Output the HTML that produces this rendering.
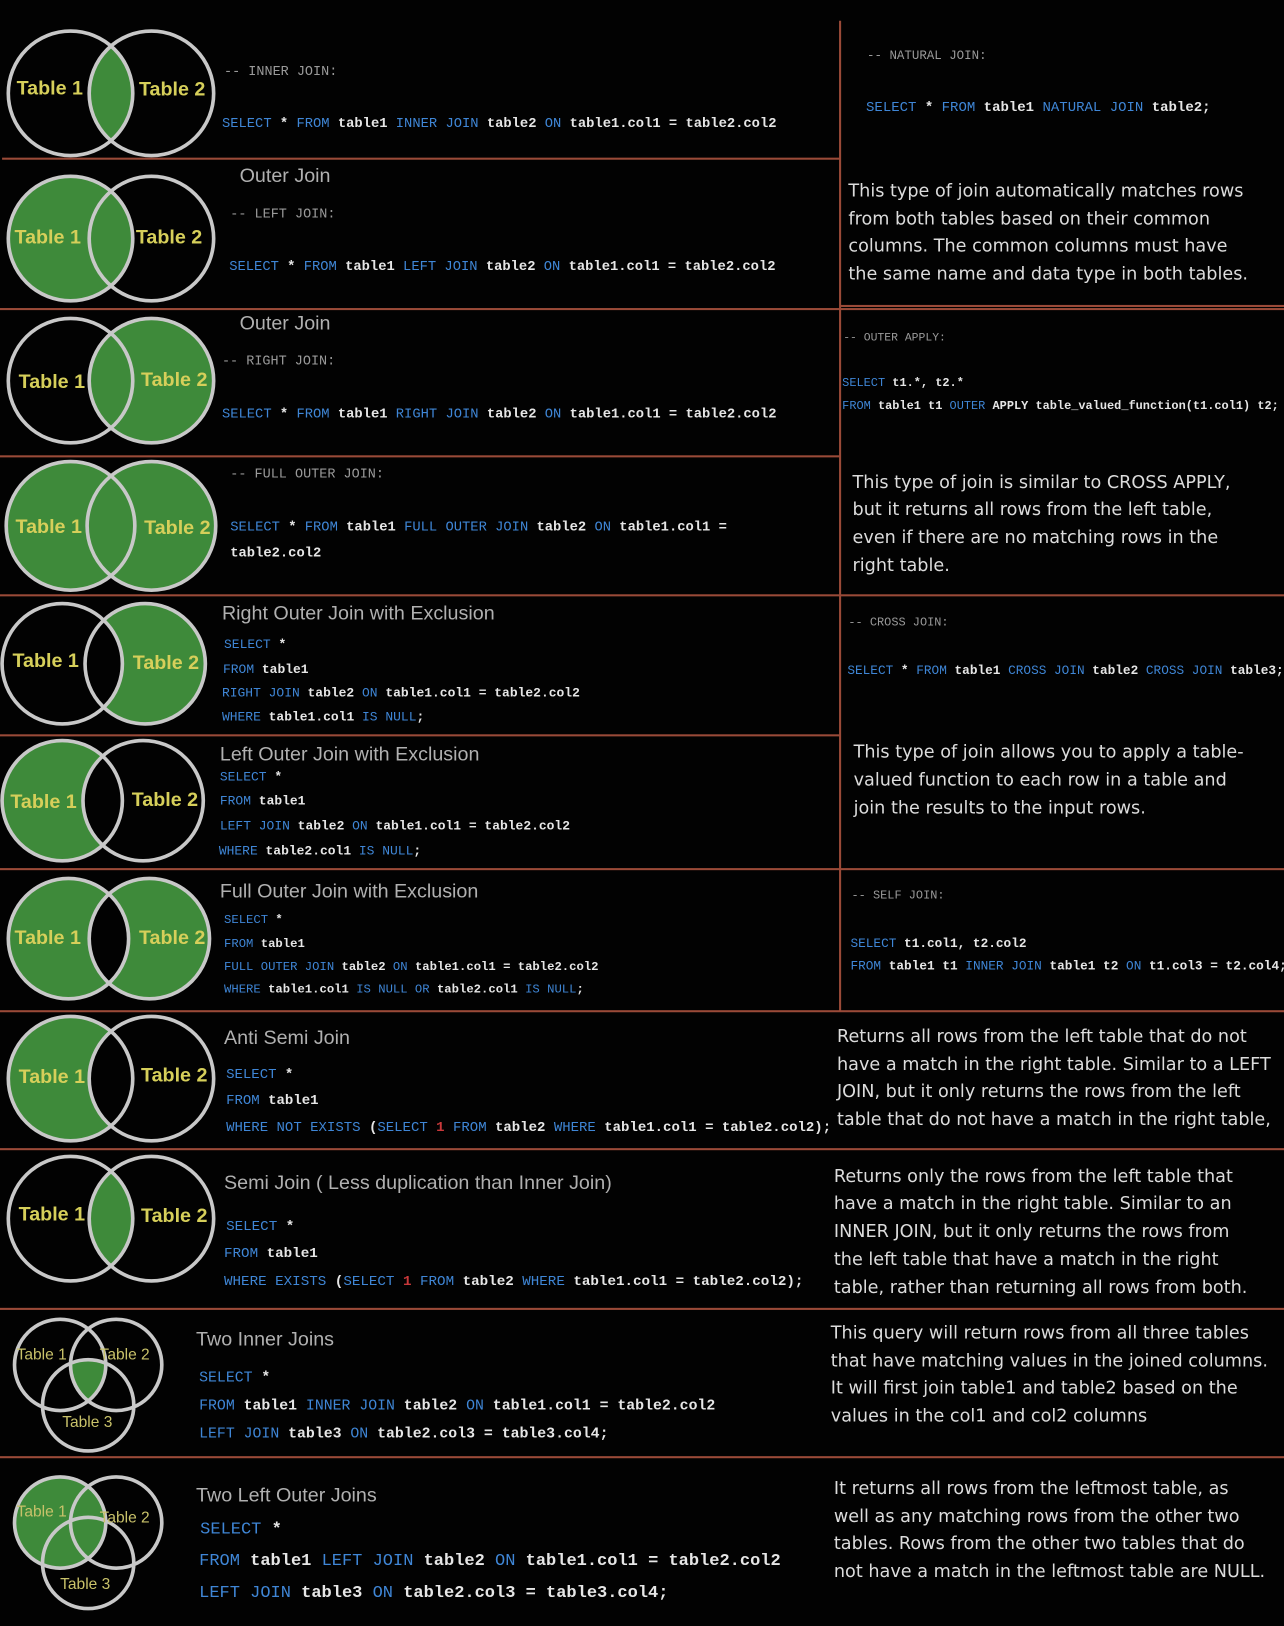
<!DOCTYPE html>
<html><head><meta charset="utf-8"><style>
html,body{margin:0;padding:0;background:#020202;}
body{width:1284px;height:1626px;overflow:hidden;position:relative;}
#w{position:absolute;left:0;top:0;width:1238px;height:1568px;transform:scale(1.03715);transform-origin:0 0;}
.t{position:absolute;white-space:pre;line-height:1;}
.c{font-family:"Liberation Mono",monospace;font-weight:bold;color:#e6e6e6;transform:translateY(-50%);}
.k{color:#3f86d6;font-weight:normal;}
.m{color:#9a9a9a;font-weight:normal;}
.r{color:#c8383a;}
.ti{font-family:"Liberation Sans",sans-serif;font-size:19px;color:#b0b0b0;transform:translateY(-50%);}
.d{font-family:"DejaVu Sans",sans-serif;font-size:17px;color:#dcdcdc;transform:translateY(-50%);}
.h{position:absolute;height:2px;background:#9a4a38;}
.v{position:absolute;width:2px;background:#9a4a38;}
svg{position:absolute;left:0;top:0;}
</style></head><body><div id="w">
<svg width="1238" height="1568" viewBox="0 0 1238 1568">
<defs>
<clipPath id="a1"><circle cx="68" cy="90" r="60"/></clipPath>
<clipPath id="a3"><circle cx="68" cy="367" r="60"/></clipPath>
<clipPath id="a5"><circle cx="60" cy="640" r="58"/></clipPath>
<clipPath id="b6"><circle cx="138" cy="772" r="58"/></clipPath>
<clipPath id="a7"><circle cx="66" cy="905" r="58"/></clipPath>
<clipPath id="b8"><circle cx="146" cy="1040" r="60"/></clipPath>
<clipPath id="a9"><circle cx="68" cy="1175" r="60"/></clipPath>
<clipPath id="a10"><circle cx="58" cy="1316" r="44"/></clipPath>
<clipPath id="b10"><circle cx="112" cy="1316" r="44"/></clipPath>
</defs>
<g fill="#3e8a3a">
<circle cx="146" cy="90" r="60" clip-path="url(#a1)"/>
<circle cx="68" cy="230" r="60"/>
<circle cx="146" cy="367" r="60"/>
<circle cx="68" cy="507" r="62"/><circle cx="146" cy="507" r="62"/>
<circle cx="140" cy="640" r="58"/><circle cx="140" cy="640" r="58" fill="#020202" clip-path="url(#a5)"/>
<circle cx="60" cy="772" r="58"/><circle cx="60" cy="772" r="58" fill="#020202" clip-path="url(#b6)"/>
<circle cx="66" cy="905" r="58"/><circle cx="144" cy="905" r="58"/><circle cx="144" cy="905" r="58" fill="#020202" clip-path="url(#a7)"/>
<circle cx="68" cy="1040" r="60"/><circle cx="68" cy="1040" r="60" fill="#020202" clip-path="url(#b8)"/>
<circle cx="146" cy="1175" r="60" clip-path="url(#a9)"/>
<g clip-path="url(#a10)"><circle cx="85" cy="1355" r="44" clip-path="url(#b10)"/></g>
<circle cx="58" cy="1468" r="44"/>
</g>
<g fill="none" stroke="#c8c8c8" stroke-width="3.5">
<circle cx="68" cy="90" r="60"/><circle cx="146" cy="90" r="60"/>
<circle cx="68" cy="230" r="60"/><circle cx="146" cy="230" r="60"/>
<circle cx="68" cy="367" r="60"/><circle cx="146" cy="367" r="60"/>
<circle cx="68" cy="507" r="62"/><circle cx="146" cy="507" r="62"/>
<circle cx="60" cy="640" r="58"/><circle cx="140" cy="640" r="58"/>
<circle cx="60" cy="772" r="58"/><circle cx="138" cy="772" r="58"/>
<circle cx="66" cy="905" r="58"/><circle cx="144" cy="905" r="58"/>
<circle cx="68" cy="1040" r="60"/><circle cx="146" cy="1040" r="60"/>
<circle cx="68" cy="1175" r="60"/><circle cx="146" cy="1175" r="60"/>
<circle cx="58" cy="1316" r="44"/><circle cx="112" cy="1316" r="44"/><circle cx="85" cy="1355" r="44"/>
<circle cx="58" cy="1468" r="44"/><circle cx="112" cy="1468" r="44"/><circle cx="85" cy="1507" r="44"/>
</g>
<g fill="#d6cf5a" font-family="Liberation Sans,sans-serif" font-size="19" font-weight="bold">
<text x="16" y="91">Table 1</text><text x="134" y="92">Table 2</text>
<text x="14" y="235">Table 1</text><text x="131" y="235">Table 2</text>
<text x="18" y="374">Table 1</text><text x="136" y="372">Table 2</text>
<text x="15" y="514">Table 1</text><text x="139" y="515">Table 2</text>
<text x="12" y="643">Table 1</text><text x="128" y="645">Table 2</text>
<text x="10" y="779">Table 1</text><text x="127" y="777">Table 2</text>
<text x="14" y="910">Table 1</text><text x="134" y="910">Table 2</text>
<text x="18" y="1044">Table 1</text><text x="136" y="1043">Table 2</text>
<text x="18" y="1177">Table 1</text><text x="136" y="1178">Table 2</text>
</g>
<g fill="#c9c26a" font-family="Liberation Sans,sans-serif" font-size="15">
<text x="16" y="1311">Table 1</text><text x="96" y="1311">Table 2</text><text x="60" y="1376">Table 3</text>
<text x="16" y="1462">Table 1</text><text x="96" y="1468">Table 2</text><text x="58" y="1532">Table 3</text>
</g>
</svg>

<div class="h" style="left:2px;top:152px;width:808px"></div>
<div class="h" style="left:0;top:297px;width:1238px"></div>
<div class="h" style="left:0;top:439px;width:810px"></div>
<div class="h" style="left:810px;top:294px;width:428px"></div>
<div class="h" style="left:0;top:573px;width:1238px"></div>
<div class="h" style="left:0;top:708px;width:810px"></div>
<div class="h" style="left:0;top:837px;width:1238px"></div>
<div class="h" style="left:0;top:974px;width:1238px"></div>
<div class="h" style="left:0;top:1107px;width:1238px"></div>
<div class="h" style="left:0;top:1261px;width:1238px"></div>
<div class="h" style="left:0;top:1404px;width:1238px"></div>
<div class="v" style="left:809px;top:20px;height:955px"></div>

<!-- left column -->
<div class="t c" style="left:216px;top:69px;font-size:13px"><span class="m">-- INNER JOIN:</span></div>
<div class="t c" style="left:214px;top:119px;font-size:13.3px"><span class="k">SELECT</span> * <span class="k">FROM</span> table1 <span class="k">INNER JOIN</span> table2 <span class="k">ON</span> table1.col1 = table2.col2</div>

<div class="t ti" style="left:231px;top:170px">Outer Join</div>
<div class="t c" style="left:222px;top:206px;font-size:13px"><span class="m">-- LEFT JOIN:</span></div>
<div class="t c" style="left:221px;top:257px;font-size:13.3px"><span class="k">SELECT</span> * <span class="k">FROM</span> table1 <span class="k">LEFT JOIN</span> table2 <span class="k">ON</span> table1.col1 = table2.col2</div>

<div class="t ti" style="left:231px;top:312px">Outer Join</div>
<div class="t c" style="left:214px;top:348px;font-size:13px"><span class="m">-- RIGHT JOIN:</span></div>
<div class="t c" style="left:214px;top:399px;font-size:13.3px"><span class="k">SELECT</span> * <span class="k">FROM</span> table1 <span class="k">RIGHT JOIN</span> table2 <span class="k">ON</span> table1.col1 = table2.col2</div>

<div class="t c" style="left:222px;top:457px;font-size:13px"><span class="m">-- FULL OUTER JOIN:</span></div>
<div class="t c" style="left:222px;top:508px;font-size:13.3px"><span class="k">SELECT</span> * <span class="k">FROM</span> table1 <span class="k">FULL OUTER JOIN</span> table2 <span class="k">ON</span> table1.col1 =</div>
<div class="t c" style="left:222px;top:533px;font-size:13.3px">table2.col2</div>

<div class="t ti" style="left:214px;top:592px">Right Outer Join with Exclusion</div>
<div class="t c" style="left:216px;top:622px;font-size:12.5px"><span class="k">SELECT</span> *</div>
<div class="t c" style="left:215px;top:646px;font-size:12.5px"><span class="k">FROM</span> table1</div>
<div class="t c" style="left:214px;top:669px;font-size:12.5px"><span class="k">RIGHT JOIN</span> table2 <span class="k">ON</span> table1.col1 = table2.col2</div>
<div class="t c" style="left:214px;top:692px;font-size:12.5px"><span class="k">WHERE</span> table1.col1 <span class="k">IS NULL</span>;</div>

<div class="t ti" style="left:212px;top:728px">Left Outer Join with Exclusion</div>
<div class="t c" style="left:212px;top:750px;font-size:12.5px"><span class="k">SELECT</span> *</div>
<div class="t c" style="left:212px;top:773px;font-size:12.5px"><span class="k">FROM</span> table1</div>
<div class="t c" style="left:212px;top:797px;font-size:12.5px"><span class="k">LEFT JOIN</span> table2 <span class="k">ON</span> table1.col1 = table2.col2</div>
<div class="t c" style="left:211px;top:821px;font-size:12.5px"><span class="k">WHERE</span> table2.col1 <span class="k">IS NULL</span>;</div>

<div class="t ti" style="left:212px;top:860px">Full Outer Join with Exclusion</div>
<div class="t c" style="left:216px;top:888px;font-size:11.8px"><span class="k">SELECT</span> *</div>
<div class="t c" style="left:216px;top:911px;font-size:11.8px"><span class="k">FROM</span> table1</div>
<div class="t c" style="left:216px;top:933px;font-size:11.8px"><span class="k">FULL OUTER JOIN</span> table2 <span class="k">ON</span> table1.col1 = table2.col2</div>
<div class="t c" style="left:216px;top:955px;font-size:11.8px"><span class="k">WHERE</span> table1.col1 <span class="k">IS NULL OR</span> table2.col1 <span class="k">IS NULL</span>;</div>

<div class="t ti" style="left:216px;top:1001px">Anti Semi Join</div>
<div class="t c" style="left:218px;top:1037px;font-size:13.5px"><span class="k">SELECT</span> *</div>
<div class="t c" style="left:218px;top:1062px;font-size:13.5px"><span class="k">FROM</span> table1</div>
<div class="t c" style="left:218px;top:1088px;font-size:13.5px"><span class="k">WHERE NOT EXISTS</span> (<span class="k">SELECT</span> <span class="r">1</span> <span class="k">FROM</span> table2 <span class="k">WHERE</span> table1.col1 = table2.col2);</div>

<div class="t ti" style="left:216px;top:1141px">Semi Join ( Less duplication than Inner Join)</div>
<div class="t c" style="left:218px;top:1184px;font-size:13.7px"><span class="k">SELECT</span> *</div>
<div class="t c" style="left:216px;top:1210px;font-size:13.7px"><span class="k">FROM</span> table1</div>
<div class="t c" style="left:216px;top:1237px;font-size:13.7px"><span class="k">WHERE EXISTS</span> (<span class="k">SELECT</span> <span class="r">1</span> <span class="k">FROM</span> table2 <span class="k">WHERE</span> table1.col1 = table2.col2);</div>

<div class="t ti" style="left:189px;top:1292px">Two Inner Joins</div>
<div class="t c" style="left:192px;top:1329px;font-size:14.3px"><span class="k">SELECT</span> *</div>
<div class="t c" style="left:192px;top:1356px;font-size:14.3px"><span class="k">FROM</span> table1 <span class="k">INNER JOIN</span> table2 <span class="k">ON</span> table1.col1 = table2.col2</div>
<div class="t c" style="left:192px;top:1383px;font-size:14.3px"><span class="k">LEFT JOIN</span> table3 <span class="k">ON</span> table2.col3 = table3.col4;</div>

<div class="t ti" style="left:189px;top:1442px">Two Left Outer Joins</div>
<div class="t c" style="left:193px;top:1475px;font-size:16.4px"><span class="k">SELECT</span> *</div>
<div class="t c" style="left:192px;top:1505px;font-size:16.4px"><span class="k">FROM</span> table1 <span class="k">LEFT JOIN</span> table2 <span class="k">ON</span> table1.col1 = table2.col2</div>
<div class="t c" style="left:192px;top:1536px;font-size:16.4px"><span class="k">LEFT JOIN</span> table3 <span class="k">ON</span> table2.col3 = table3.col4;</div>

<!-- right column -->
<div class="t c" style="left:836px;top:54px;font-size:12px"><span class="m">-- NATURAL JOIN:</span></div>
<div class="t c" style="left:835px;top:105px;font-size:13.5px"><span class="k">SELECT</span> * <span class="k">FROM</span> table1 <span class="k">NATURAL JOIN</span> table2;</div>
<div class="t d" style="left:818px;top:185px">This type of join automatically matches rows</div>
<div class="t d" style="left:818px;top:212px">from both tables based on their common</div>
<div class="t d" style="left:818px;top:238px">columns. The common columns must have</div>
<div class="t d" style="left:818px;top:265px">the same name and data type in both tables.</div>

<div class="t c" style="left:813px;top:327px;font-size:11px"><span class="m">-- OUTER APPLY:</span></div>
<div class="t c" style="left:812px;top:370px;font-size:11.5px"><span class="k">SELECT</span> t1.*, t2.*</div>
<div class="t c" style="left:812px;top:392px;font-size:11.5px"><span class="k">FROM</span> table1 t1 <span class="k">OUTER</span> APPLY table_valued_function(t1.col1) t2;</div>
<div class="t d" style="left:822px;top:466px">This type of join is similar to CROSS APPLY,</div>
<div class="t d" style="left:822px;top:492px">but it returns all rows from the left table,</div>
<div class="t d" style="left:822px;top:519px">even if there are no matching rows in the</div>
<div class="t d" style="left:822px;top:546px">right table.</div>

<div class="t c" style="left:818px;top:601px;font-size:11.5px"><span class="m">-- CROSS JOIN:</span></div>
<div class="t c" style="left:817px;top:647px;font-size:12.3px"><span class="k">SELECT</span> * <span class="k">FROM</span> table1 <span class="k">CROSS JOIN</span> table2 <span class="k">CROSS JOIN</span> table3;</div>
<div class="t d" style="left:823px;top:726px">This type of join allows you to apply a table-</div>
<div class="t d" style="left:823px;top:753px">valued function to each row in a table and</div>
<div class="t d" style="left:823px;top:780px">join the results to the input rows.</div>

<div class="t c" style="left:821px;top:864px;font-size:11.5px"><span class="m">-- SELF JOIN:</span></div>
<div class="t c" style="left:820px;top:910px;font-size:12.3px"><span class="k">SELECT</span> t1.col1, t2.col2</div>
<div class="t c" style="left:820px;top:932px;font-size:12.3px"><span class="k">FROM</span> table1 t1 <span class="k">INNER JOIN</span> table1 t2 <span class="k">ON</span> t1.col3 = t2.col4;</div>

<div class="t d" style="left:807px;top:1000px">Returns all rows from the left table that do not</div>
<div class="t d" style="left:807px;top:1027px">have a match in the right table. Similar to a LEFT</div>
<div class="t d" style="left:807px;top:1053px">JOIN, but it only returns the rows from the left</div>
<div class="t d" style="left:807px;top:1080px">table that do not have a match in the right table,</div>

<div class="t d" style="left:804px;top:1135px">Returns only the rows from the left table that</div>
<div class="t d" style="left:804px;top:1161px">have a match in the right table. Similar to an</div>
<div class="t d" style="left:804px;top:1188px">INNER JOIN, but it only returns the rows from</div>
<div class="t d" style="left:804px;top:1215px">the left table that have a match in the right</div>
<div class="t d" style="left:804px;top:1242px">table, rather than returning all rows from both.</div>

<div class="t d" style="left:801px;top:1286px">This query will return rows from all three tables</div>
<div class="t d" style="left:801px;top:1313px">that have matching values in the joined columns.</div>
<div class="t d" style="left:801px;top:1339px">It will first join table1 and table2 based on the</div>
<div class="t d" style="left:801px;top:1366px">values in the col1 and col2 columns</div>

<div class="t d" style="left:804px;top:1436px">It returns all rows from the leftmost table, as</div>
<div class="t d" style="left:804px;top:1463px">well as any matching rows from the other two</div>
<div class="t d" style="left:804px;top:1489px">tables. Rows from the other two tables that do</div>
<div class="t d" style="left:804px;top:1516px">not have a match in the leftmost table are NULL.</div>
</div></body></html>
